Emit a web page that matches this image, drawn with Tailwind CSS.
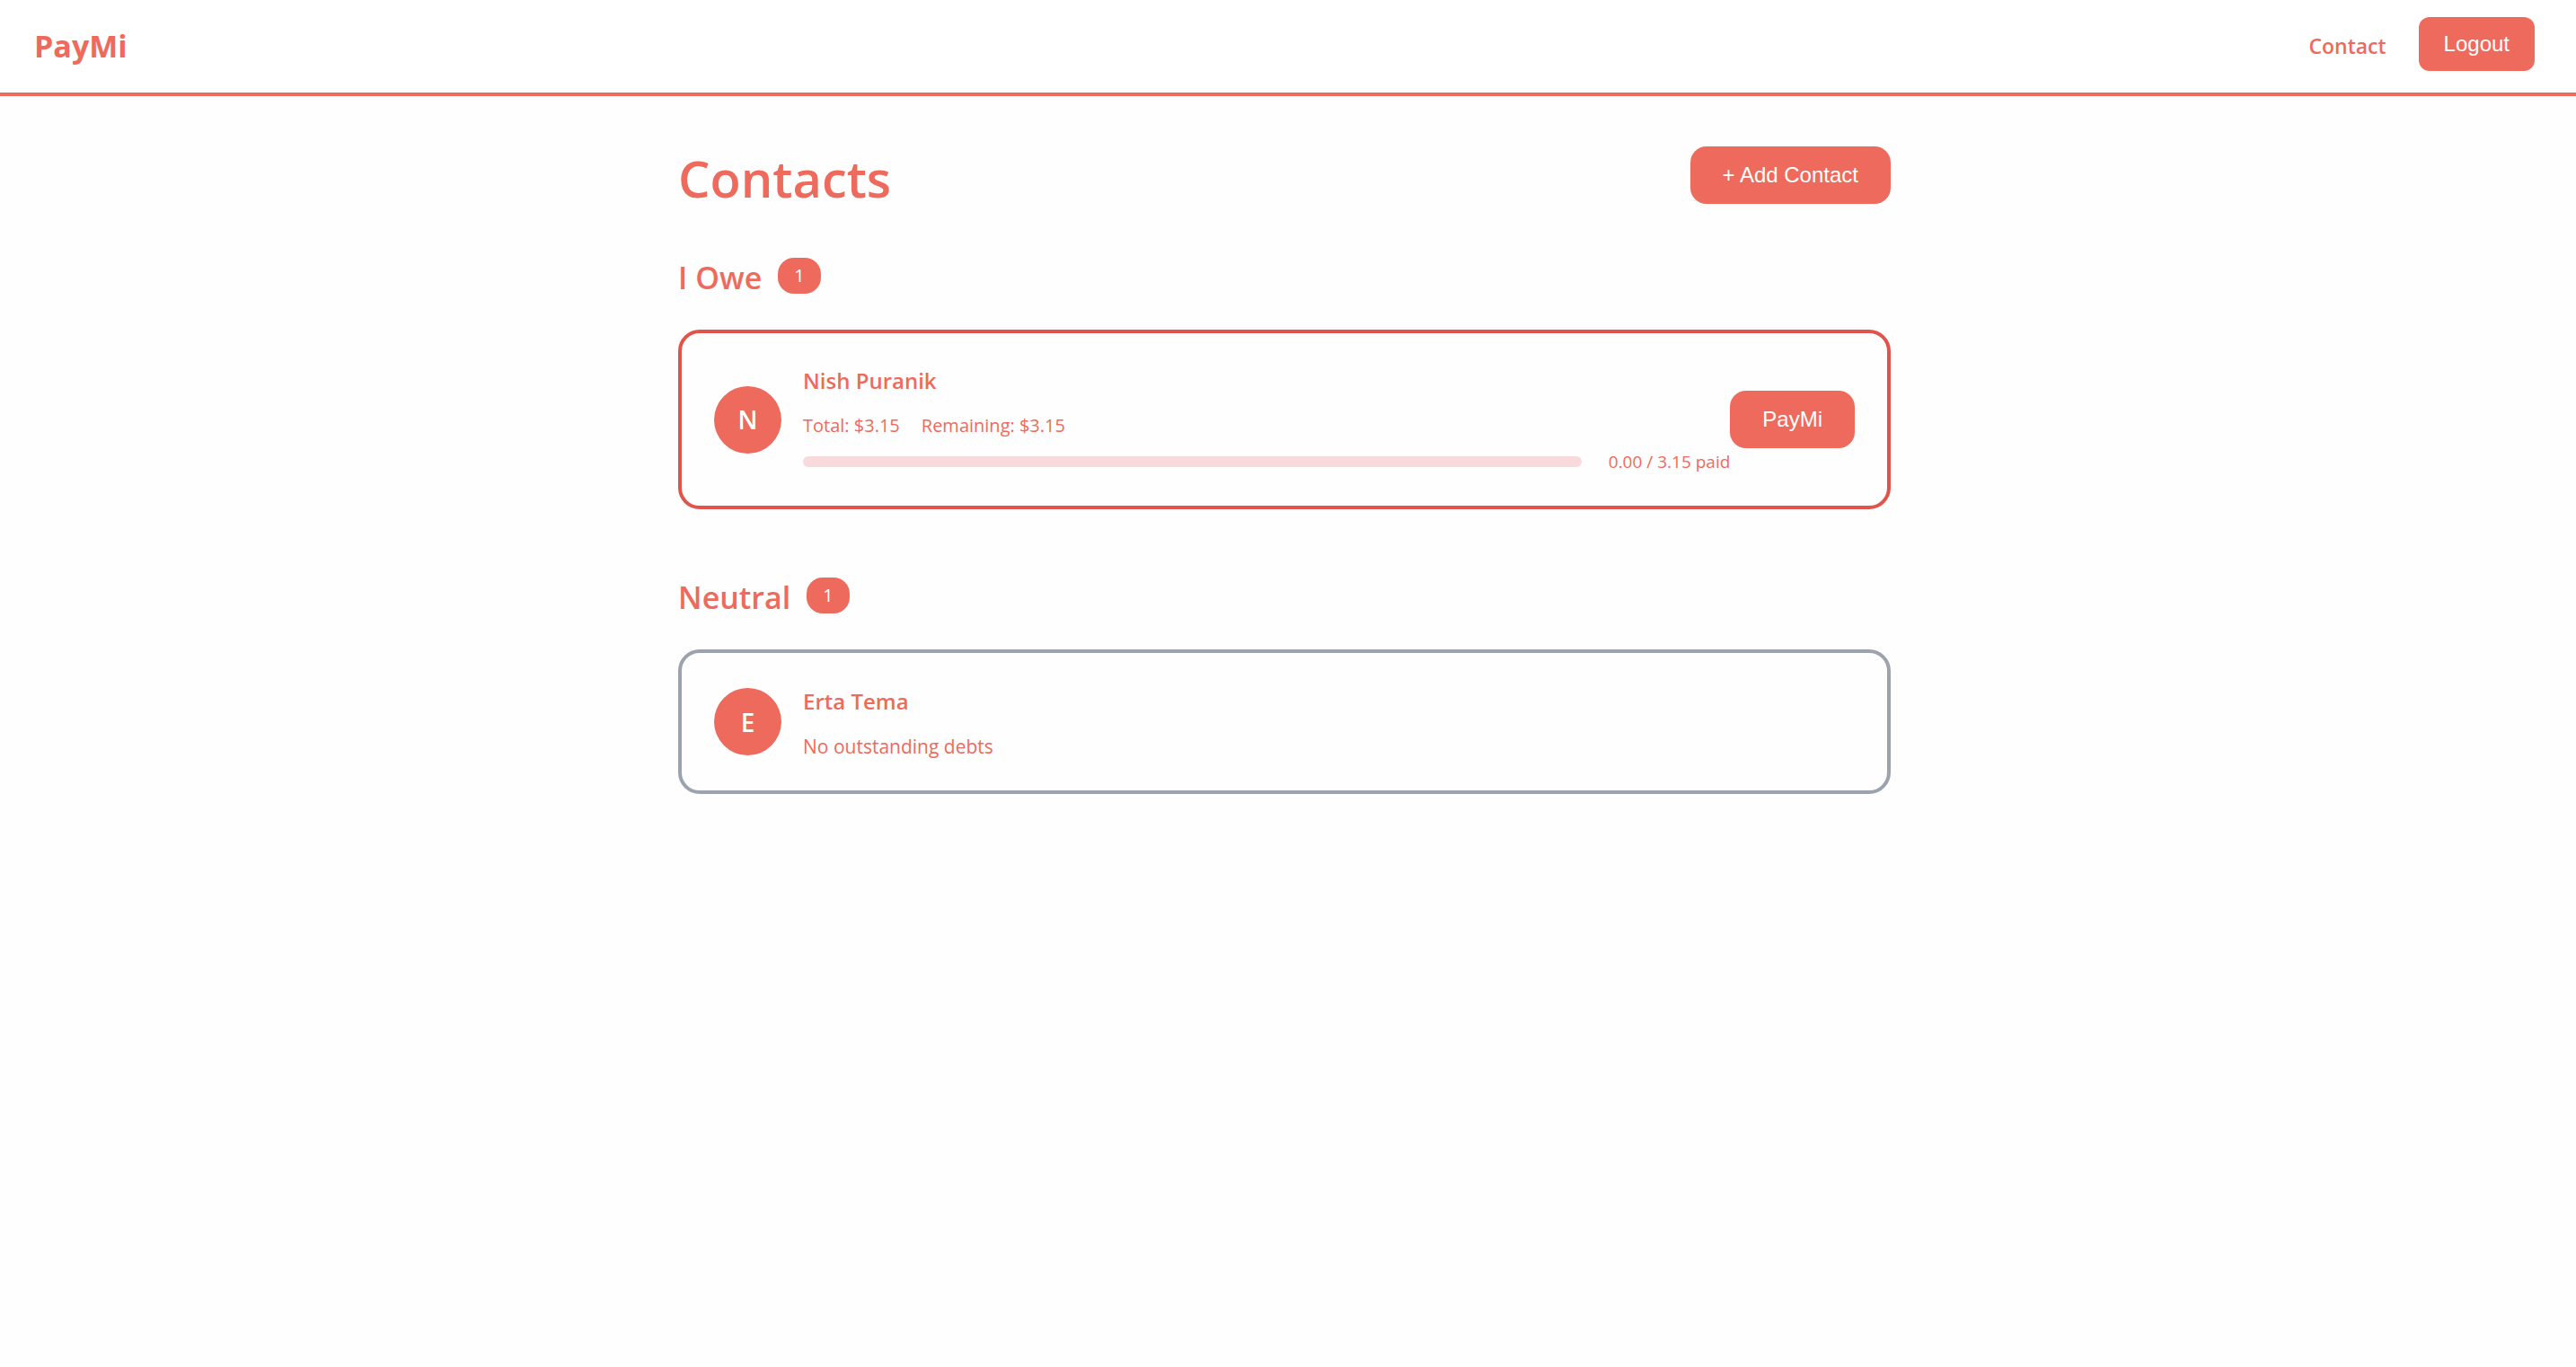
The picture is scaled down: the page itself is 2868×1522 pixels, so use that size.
<!DOCTYPE html>
<html lang="en">
<head>
    <meta charset="UTF-8">
    <meta name="viewport" content="width=device-width, initial-scale=1.0">
    <title>PayMi</title>
    <script src="https://cdn.jsdelivr.net/npm/@tailwindcss/browser@4"></script>
</head>
<body class="min-h-screen bg-[#fefefe] font-['Open_Sans',sans-serif] text-[#ee6a5c]">
    <header class="flex h-[107px] items-start justify-between border-b-4 border-[#ee6a5c] bg-white pt-[19px] pr-[46px] pl-[38px]">
        <a href="#" class="text-[34px] leading-[64px] font-bold">PayMi</a>
        <nav class="flex items-start gap-9">
            <a href="#" class="text-[23px] leading-[64px] font-semibold">Contact</a>
            <button class="h-[60px] rounded-xl bg-[#ee6a5c] px-7 font-['Liberation_Sans',sans-serif] text-2xl text-white">Logout</button>
        </nav>
    </header>

    <main class="pt-14 pr-2">
        <div class="mx-auto max-w-[1350px]">
            <div class="flex items-start justify-between">
                <h1 class="text-[56px] leading-[70px] font-semibold">Contacts</h1>
                <button class="h-16 rounded-[18px] bg-[#ee6a5c] px-9 font-['Liberation_Sans',sans-serif] text-2xl text-white">+ Add Contact</button>
            </div>

            <section class="mt-[54px]">
                <div class="flex items-start gap-[18px]">
                    <h2 class="text-[34px] leading-[44px] font-semibold">I Owe</h2>
                    <span class="h-10 rounded-[18px] bg-[#ee6a5c] px-[18px] text-[20px] leading-10 text-white">1</span>
                </div>
                <div class="mt-9 flex h-[200px] items-center rounded-3xl border-4 border-[#e0544c] px-9">
                    <div class="flex size-[75px] shrink-0 items-center justify-center rounded-full bg-[#ee6a5c] text-[28px] font-semibold text-white">N</div>
                    <div class="ml-6 flex-1 pt-1">
                        <h3 class="text-[24px] leading-9 font-semibold">Nish Puranik</h3>
                        <div class="mt-[14px] flex gap-6 text-[20px] leading-9">
                            <span>Total: $3.15</span>
                            <span>Remaining: $3.15</span>
                        </div>
                        <div class="mt-1 flex items-center gap-[30px]">
                            <div class="h-3 flex-1 rounded-full bg-[#f8dadc]"></div>
                            <span class="text-[19px] leading-9">0.00 / 3.15 paid</span>
                        </div>
                    </div>
                    <button class="h-16 rounded-[18px] bg-[#ee6a5c] px-9 font-['Liberation_Sans',sans-serif] text-2xl text-white">PayMi</button>
                </div>
            </section>

            <section class="mt-[76px]">
                <div class="flex items-start gap-[18px]">
                    <h2 class="text-[34px] leading-[44px] font-semibold">Neutral</h2>
                    <span class="h-10 rounded-[18px] bg-[#ee6a5c] px-[18px] text-[20px] leading-10 text-white">1</span>
                </div>
                <div class="mt-9 flex h-[161px] items-center rounded-3xl border-4 border-[#9ca3af] px-9">
                    <div class="flex size-[75px] shrink-0 items-center justify-center rounded-full bg-[#ee6a5c] text-[28px] font-semibold text-white">E</div>
                    <div class="ml-6 flex-1 pt-1">
                        <h3 class="text-[24px] leading-9 font-semibold">Erta Tema</h3>
                        <p class="mt-[14px] text-[21px] leading-9">No outstanding debts</p>
                    </div>
                </div>
            </section>
        </div>
    </main>
</body>
</html>
